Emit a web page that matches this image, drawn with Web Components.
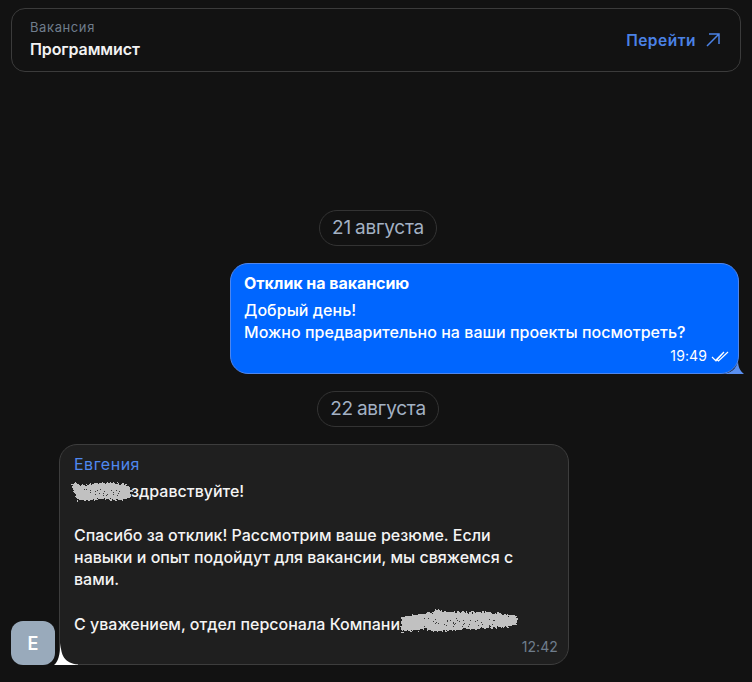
<!DOCTYPE html>
<html lang="ru">
<head>
<meta charset="utf-8">
<title>Чат</title>
<style>
html,body{margin:0;padding:0;background:#121212;}
body{width:752px;height:682px;overflow:hidden;font-family:Inter,"Noto Sans",sans-serif;color:#f2f2f2;}
</style>
</head>
<body>
<chat-page>
  <vacancy-card label="Вакансия" title="Программист" action="Перейти"></vacancy-card>
  <date-pill style="margin-top:138px">21 августа</date-pill>
  <chat-bubble mine style="margin-top:17px" title="Отклик на вакансию" time="19:49">Добрый день!<br>Можно предварительно на ваши проекты посмотреть?</chat-bubble>
  <date-pill style="margin-top:17px">22 августа</date-pill>
  <chat-bubble style="margin-top:17px" author="Евгения" avatar="Е" time="12:42"><scribble-mark w="59" h="18" style="margin-left:-2px"></scribble-mark>здравствуйте!<br><br>Спасибо за отклик! Рассмотрим ваше резюме. Если<br>навыки и опыт подойдут для вакансии, мы свяжемся с<br>вами.<br><br>С уважением, отдел персонала Компани<scribble-mark long w="118" h="24"></scribble-mark></chat-bubble>
</chat-page>
<script>
class ChatPage extends HTMLElement {
    constructor(){
        super();
        this.attachShadow({mode:'open'}).innerHTML = `
        <style>
        :host{display:flex;flex-direction:column;padding:8px 11px 0;}
        </style>
        <slot></slot>`
    }
}
class VacancyCard extends HTMLElement {
    constructor(){
        super();
        this.attachShadow({mode:'open'})
    }
    connectedCallback(){
        this.shadowRoot.innerHTML = `
        <style>
        :host{display:flex;align-items:center;justify-content:space-between;box-sizing:border-box;height:64px;padding:0 18px;border:1px solid #3b3b3b;border-radius:14px;}
        .label{font-size:13px;line-height:16px;letter-spacing:.6px;color:#6f7d8c;margin-top:-3px;}
        .title{font-size:16px;line-height:20px;font-weight:600;letter-spacing:-.1px;color:#f2f2f2;margin-top:4px;}
        .action{display:flex;align-items:center;gap:10px;font-size:15.500px;font-weight:600;letter-spacing:.5px;color:#4b82e6;margin-right:2px;}
        svg{display:block;}
        </style>
        <div>
          <div class="label">${this.getAttribute('label')}</div>
          <div class="title">${this.getAttribute('title')}</div>
        </div>
        <div class="action">${this.getAttribute('action')}
          <svg width="14" height="14" viewBox="0 0 14 14" fill="none" stroke="#4b82e6" stroke-width="1.5"><path d="M1 13 13 1M3 1h10v10"/></svg>
        </div>`
    }
}
class DatePill extends HTMLElement {
    constructor(){
        super();
        this.attachShadow({mode:'open'}).innerHTML = `
        <style>
        :host{display:block;align-self:center;box-sizing:border-box;height:36px;margin-left:4px;padding:0 12px;border:1px solid #333;border-radius:18px;font-size:19px;line-height:34px;color:#a3b1c4;letter-spacing:-.25px;word-spacing:-1px;white-space:nowrap;}
        </style>
        <slot></slot>`
    }
}
class UserAvatar extends HTMLElement {
    constructor(){
        super();
        this.attachShadow({mode:'open'}).innerHTML = `
        <style>
        :host{display:flex;align-items:center;justify-content:center;flex:none;width:44px;height:44px;border-radius:12px;background:#99aabb;color:#fff;font-size:18px;font-weight:600;}
        </style>
        <slot></slot>`
    }
}
class ChatBubble extends HTMLElement {
    constructor(){
        super();
        this.attachShadow({mode:'open'})
    }
    connectedCallback(){
        const mine = this.hasAttribute('mine')
        const title = this.getAttribute('title')
        const author = this.getAttribute('author')
        const avatar = this.getAttribute('avatar')
        this.shadowRoot.innerHTML = `
        <style>
        :host{display:flex;align-items:flex-end;gap:4px;justify-content:${mine ? 'flex-end' : 'flex-start'};${mine ? 'margin-right:2px;' : ''}}
        .box{position:relative;box-sizing:border-box;width:${mine ? 509 : 510}px;height:${mine ? 111 : 221}px;padding:${mine ? '9px 14px 0 13px' : '8px 14px 0'};border:1px solid ${mine ? '#4f86ec' : '#3d3d3d'};border-radius:18px;background:${mine ? '#0066ff' : '#1f1f1f'};color:#f4f4f4;font-size:16px;line-height:22.200px;font-weight:500;letter-spacing:${mine ? '.04px' : '0'};}
        .title{font-weight:700;color:#fff;line-height:20px;letter-spacing:-.05px;margin-bottom:6px;}
        .author{color:#4f88f0;font-weight:400;line-height:22px;letter-spacing:.5px;margin-bottom:4.500px;}
        .text{color:${mine ? '#fff' : '#f4f4f4'};}
        .meta{display:flex;justify-content:flex-end;align-items:center;gap:4px;font-size:14px;line-height:18px;font-weight:400;letter-spacing:.1px;color:${mine ? '#fff' : '#6f7d8c'};margin-top:${mine ? 4 : 3}px;${mine ? 'margin-right:-5px;' : 'margin-right:-4px;'}}
        .tail{position:absolute;${mine ? 'right:-6px;' : 'left:-6px;'}bottom:-1px;display:block;}
        </style>
        ${avatar ? `<user-avatar>${avatar}</user-avatar>` : ''}
        <div class="box">
          ${title ? `<div class="title">${title}</div>` : ''}
          ${author ? `<div class="author">${author}</div>` : ''}
          <div class="text"><slot></slot></div>
          <div class="meta">${this.getAttribute('time')}${mine ? `
            <svg width="18" height="11" viewBox="0 0 18 11" fill="none" stroke="#fff" stroke-width="1.200"><path d="M1 6 5 10 13 1M6.500 9 7.500 10 17 1M4.500 9.500 12.500 1.500"/></svg>` : ''}
          </div>
          ${mine
            ? `<svg class="tail" width="23" height="14" viewBox="0 0 23 14"><path d="M17 0C17 7 19 11 23 14H0C9 14 16 9 17 0Z" fill="#5a8ff0"/></svg>`
            : `<svg class="tail" width="24" height="22" viewBox="0 0 24 22"><path d="M6.500 0C7 12 10 20 24 21.500V22H0C4 19 6 12 6.500 0Z" fill="#fff"/></svg>`}
        </div>`
    }
}
customElements.define('chat-page', ChatPage)
customElements.define('vacancy-card', VacancyCard)
customElements.define('date-pill', DatePill)
customElements.define('user-avatar', UserAvatar)
customElements.define('chat-bubble', ChatBubble)
class ScribbleMark extends HTMLElement {
    constructor(){
        super();
        this.attachShadow({mode:'open'})
    }
    connectedCallback(){
        const w = +this.getAttribute('w'), h = +this.getAttribute('h')
        const d = this.hasAttribute('long')
            ? 'M1 7 14 5 30 3 36 0 50 2 66 2 88 2 104 4 117 6 118 13 112 16 92 18 66 19 50 21 34 21 24 19 8 21 1 22Z'
            : 'M0 1 14 2 22 0 40 0 52 1 59 4 59 14 50 17 28 16 14 18 5 17 3 9 0 7Z'
        // specks, the scribble in the reference is rough
        let dots = ''
        for (let i = 0; i < (w > 100 ? 40 : 22); i++) {
            const a = Math.sin(i * 12.9898) * 43758.5453, b = Math.sin(i * 78.233) * 43758.5453
            const x = Math.round(w * (0.2 + 0.6 * (a - Math.floor(a))))
            const y = Math.round(h * (0.32 + 0.36 * (b - Math.floor(b))))
            dots += `M${x} ${y}h1v1h-1z`
        }
        const id = 'rough' + w
        // zero height in the line, so a tall mark does not push the baseline
        this.shadowRoot.innerHTML = `
        <style>
        :host{display:inline-block;vertical-align:2px;width:${w}px;height:${h}px;margin:${6 - h}px 0 -6px;line-height:0;}
        svg{display:block;overflow:visible;}
        </style>
        <svg width="${w}" height="${h}" viewBox="0 0 ${w} ${h}" shape-rendering="crispEdges">
          <defs><filter id="${id}" x="-10%" y="-30%" width="120%" height="160%"><feTurbulence type="fractalNoise" baseFrequency=".4" numOctaves="2" seed="4"/><feDisplacementMap in="SourceGraphic" scale="6" xChannelSelector="R" yChannelSelector="G"/></filter></defs>
          <path d="${d}" fill="#c1c1c1" filter="url(#${id})"/><path d="${dots}" fill="#3a3a3a"/>
        </svg>`
    }
}
customElements.define('scribble-mark', ScribbleMark)
</script>
</body>
</html>
